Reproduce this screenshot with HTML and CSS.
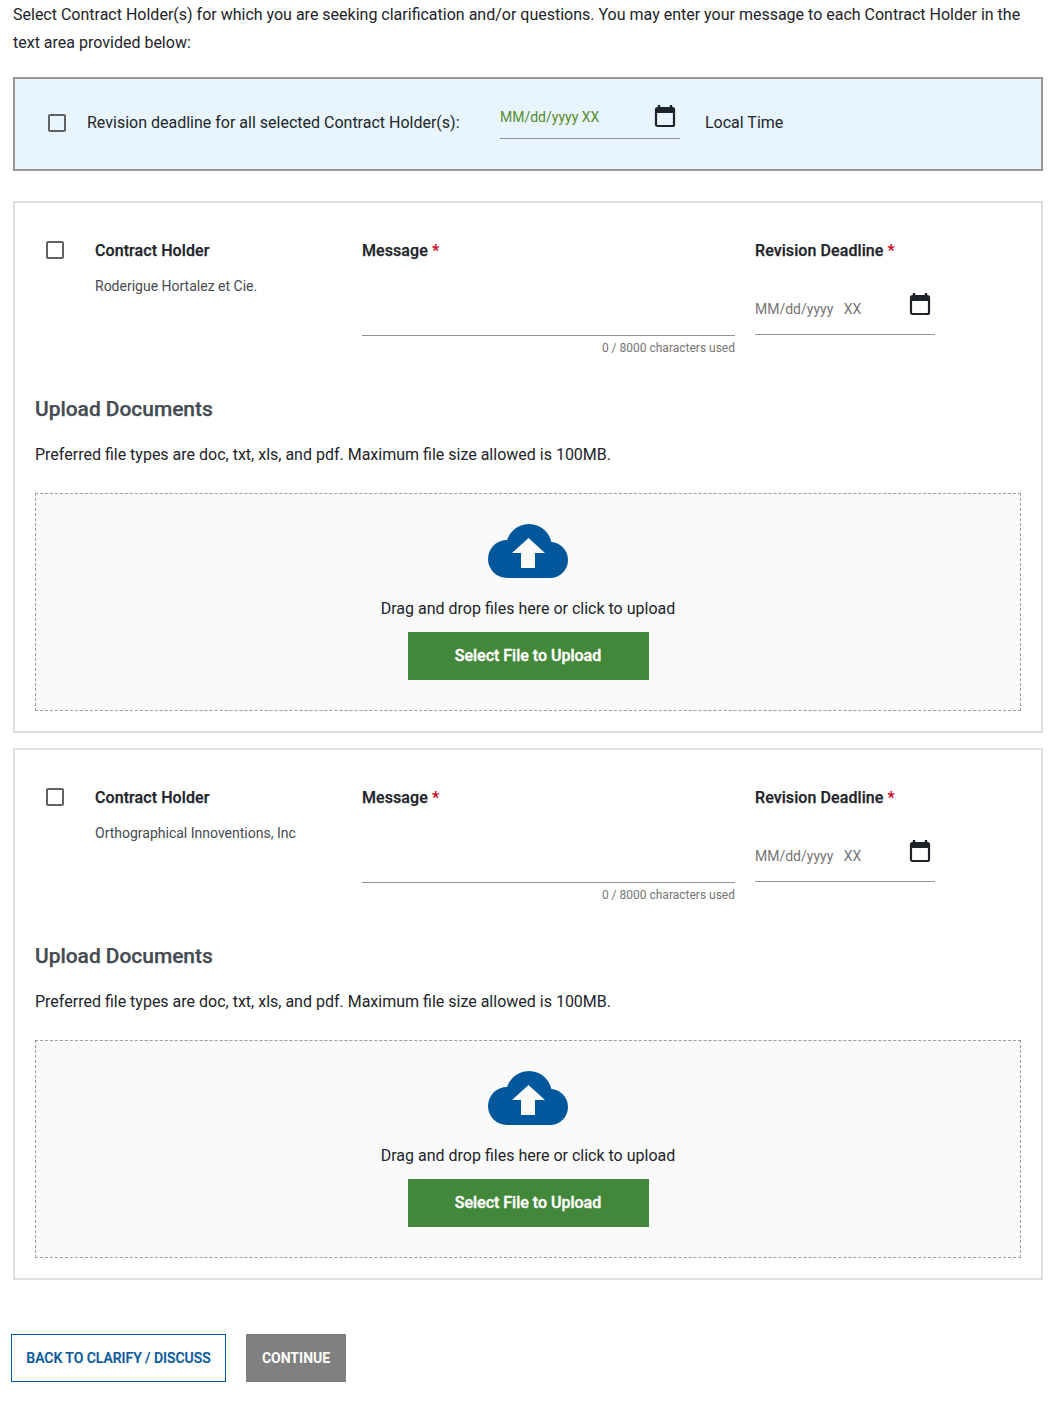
FILE: index.html
```html
<!DOCTYPE html>
<html lang="en">
<head>
  <meta charset="UTF-8" />
  <title>Clarify / Discuss</title>
  <link rel="stylesheet" href="styles.css">
</head>
<body>
  <p class="intro">Select Contract Holder(s) for which you are seeking clarification and/or questions. You may enter your message to each Contract Holder in the text area provided below:</p>

  <div class="banner">
    <span class="check check-banner"></span>
    <span class="banner-label">Revision deadline for all selected Contract Holder(s):</span>
    <div class="banner-date">
      <span>MM/dd/yyyy XX</span>
      <svg class="cal" viewBox="0 0 22 24"><path d="M5 1v3M17 1v3" stroke="#1d2329" stroke-width="2.4" fill="none"/><rect x="2" y="4" width="18" height="18" rx="1.5" fill="none" stroke="#1d2329" stroke-width="2.2"/><rect x="2" y="4" width="18" height="5" fill="#1d2329"/></svg>
    </div>
    <span class="local">Local Time</span>
  </div>

  <div class="card">
    <div class="holder-row">
      <span class="check"></span>
      <div class="holder">
        <div class="field-title">Contract Holder</div>
        <div class="holder-name">Roderigue Hortalez et Cie.</div>
      </div>
      <div class="message">
        <div class="field-title">Message <span class="req">*</span></div>
        <div class="message-line"></div>
        <div class="count">0 / 8000 characters used</div>
      </div>
      <div class="deadline">
        <div class="field-title">Revision Deadline <span class="req">*</span></div>
        <div class="deadline-input">
          <span>MM/dd/yyyy&nbsp;&nbsp; XX</span>
          <svg class="cal" viewBox="0 0 22 24"><path d="M5 1v3M17 1v3" stroke="#1d2329" stroke-width="2.4" fill="none"/><rect x="2" y="4" width="18" height="18" rx="1.5" fill="none" stroke="#1d2329" stroke-width="2.2"/><rect x="2" y="4" width="18" height="5" fill="#1d2329"/></svg>
        </div>
      </div>
    </div>
    <h2>Upload Documents</h2>
    <p class="types">Preferred file types are doc, txt, xls, and pdf. Maximum file size allowed is 100MB.</p>
    <div class="dropzone">
      <svg class="cloud" viewBox="0 0 80 54"><g fill="#01579b"><circle cx="41" cy="23" r="23"/><circle cx="19" cy="35" r="19"/><circle cx="62" cy="36" r="18"/><rect x="19" y="20" width="43" height="34"/></g><path d="M40.5 14 57 29H47V44H33V29H24z" fill="#fafafa"/></svg>
      <div class="drop-text">Drag and drop files here or click to upload</div>
      <button class="btn-upload">Select File to Upload</button>
    </div>
  </div>

  <div class="card">
    <div class="holder-row">
      <span class="check"></span>
      <div class="holder">
        <div class="field-title">Contract Holder</div>
        <div class="holder-name">Orthographical Innoventions, Inc</div>
      </div>
      <div class="message">
        <div class="field-title">Message <span class="req">*</span></div>
        <div class="message-line"></div>
        <div class="count">0 / 8000 characters used</div>
      </div>
      <div class="deadline">
        <div class="field-title">Revision Deadline <span class="req">*</span></div>
        <div class="deadline-input">
          <span>MM/dd/yyyy&nbsp;&nbsp; XX</span>
          <svg class="cal" viewBox="0 0 22 24"><path d="M5 1v3M17 1v3" stroke="#1d2329" stroke-width="2.4" fill="none"/><rect x="2" y="4" width="18" height="18" rx="1.5" fill="none" stroke="#1d2329" stroke-width="2.2"/><rect x="2" y="4" width="18" height="5" fill="#1d2329"/></svg>
        </div>
      </div>
    </div>
    <h2>Upload Documents</h2>
    <p class="types">Preferred file types are doc, txt, xls, and pdf. Maximum file size allowed is 100MB.</p>
    <div class="dropzone">
      <svg class="cloud" viewBox="0 0 80 54"><g fill="#01579b"><circle cx="41" cy="23" r="23"/><circle cx="19" cy="35" r="19"/><circle cx="62" cy="36" r="18"/><rect x="19" y="20" width="43" height="34"/></g><path d="M40.5 14 57 29H47V44H33V29H24z" fill="#fafafa"/></svg>
      <div class="drop-text">Drag and drop files here or click to upload</div>
      <button class="btn-upload">Select File to Upload</button>
    </div>
  </div>

  <div class="actions">
    <button class="btn-back">BACK TO CLARIFY / DISCUSS</button>
    <button class="btn-continue">CONTINUE</button>
  </div>
</body>
</html>
```

FILE: styles.css
```css
body {
  margin: 0;
  padding: 0 19px 38px 13px;
  font-family: Roboto, "Liberation Sans", sans-serif;
  font-size: 16px;
  color: #212529;
  background: #fff;
}

.intro {
  margin: 1px 0 20px;
  line-height: 28px;
  color: #1d2329;
}

.check {
  display: block;
  width: 14px;
  height: 14px;
  border: 2px solid #616161;
  border-radius: 2px;
}

/* Banner diatas */
.banner {
  display: flex;
  align-items: center;
  height: 86px;
  margin-bottom: 30px;
  padding: 0 0 4px 33px;
  background: #e8f5fe;
  border: 2px solid #999;
}

.check-banner {
  margin: 2px 21px 0 0;
}

.banner-label {
  width: 413px;
}

.banner-date {
  display: flex;
  justify-content: space-between;
  width: 180px;
  height: 44px;
  margin-top: -10px;
  box-sizing: border-box;
  padding: 9px 4.5px 0 0;
  border-bottom: 1px solid #8d9399;
  font-size: 14px;
  color: #558b2f;
}

.banner-date span {
  margin-top: 5px;
}

.cal {
  width: 22px;
  height: 24px;
}

.local {
  margin-left: 25px;
}

.card {
  height: 528px;
  margin-bottom: 15px;
  padding: 0 20px;
  border: 2px solid #e0e0e0;
}

.holder-row {
  display: flex;
  height: 192px;
  padding-top: 38px;
  box-sizing: border-box;
}

.holder-row .check {
  margin: 0 31px 0 11px;
}

.holder {
  width: 267px;
}

.field-title {
  font-weight: 500;
  line-height: 20px;
  letter-spacing: 0.08px;
  -webkit-text-stroke: 0.25px #1d2329;
  color: #1d2329;
}

.req {
  font-weight: 700;
  color: #d0021b;
  -webkit-text-stroke: 0;
}

.holder-name {
  margin-top: 15px;
  font-size: 14px;
  line-height: 20px;
  color: #444b52;
}

.message {
  width: 373px;
  margin-right: 20px;
}

.message-line {
  height: 74px;
  border-bottom: 1px solid #8d9399;
}

.count {
  margin-top: 5px;
  font-size: 12px;
  line-height: 14px;
  text-align: right;
  color: #757575;
}

.deadline {
  width: 180px;
}

.deadline-input {
  display: flex;
  justify-content: space-between;
  height: 74px;
  box-sizing: border-box;
  padding: 31px 4px 0 0;
  border-bottom: 1px solid #8d9399;
  font-size: 14px;
  color: #757575;
}

.deadline-input span {
  margin-top: 9px;
}

h2 {
  margin: 0;
  font-size: 21px;
  font-weight: 500;
  line-height: 28px;
  letter-spacing: -0.05px;
  -webkit-text-stroke: 0.25px #444b52;
  color: #444b52;
}

.types {
  margin: 20px 0 26px;
  line-height: 24px;
  color: #1d2329;
}

.dropzone {
  display: flex;
  flex-direction: column;
  align-items: center;
  height: 186px;
  padding-top: 30px;
  border: 1px dashed #9e9e9e;
  background: #fafafa;
}

.cloud {
  width: 80px;
  height: 54px;
}

.drop-text {
  margin-top: 21px;
  line-height: 20px;
  color: #1d2329;
}

.btn-upload {
  width: 241px;
  height: 48px;
  margin-top: 13px;
  padding: 0 0 2px;
  border: none;
  background: #43873a;
  color: #fff;
  font-family: inherit;
  font-size: 16px;
  font-weight: 500;
  -webkit-text-stroke: 0.4px #fff;
}

.actions {
  display: flex;
  gap: 20px;
  margin: 54px 0 0 -2px;
}

.btn-back {
  width: 215px;
  height: 48px;
  padding: 0;
  background: #fff;
  border: 1px solid #01579b;
  color: #01579b;
  font-family: inherit;
  font-size: 14px;
  font-weight: 500;
  letter-spacing: -0.03px;
  -webkit-text-stroke: 0.2px #01579b;
}

.btn-continue {
  width: 100px;
  height: 48px;
  padding: 0;
  background: #808080;
  border: none;
  color: #fff;
  font-family: inherit;
  font-size: 14px;
  font-weight: 700;
}
```
